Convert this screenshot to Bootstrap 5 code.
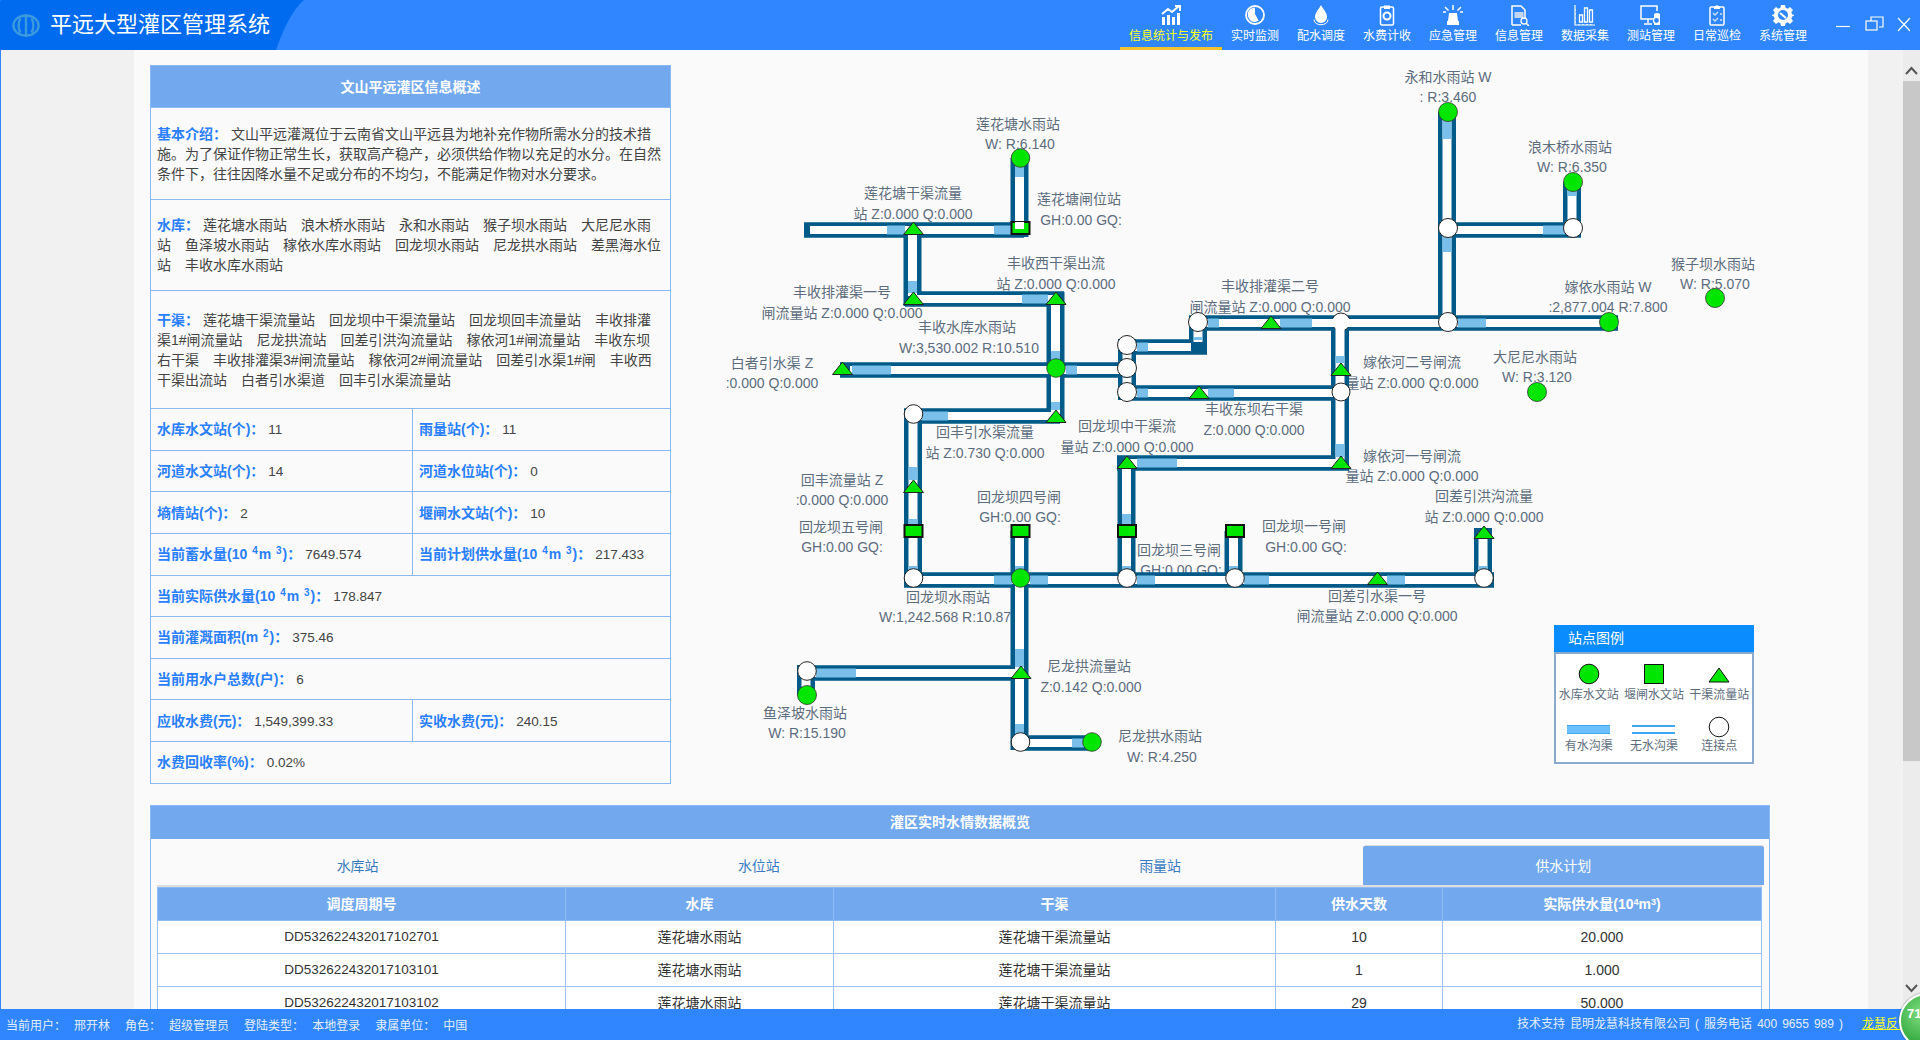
<!doctype html>
<html lang="zh-CN">
<head>
<meta charset="utf-8">
<title>平远大型灌区管理系统</title>
<link href="https://cdn.jsdelivr.net/npm/bootstrap@5.3.0/dist/css/bootstrap.min.css" rel="stylesheet">
<style>
html,body{height:100%;overflow:hidden}
body{font-family:"Liberation Sans","Noto Sans CJK SC",sans-serif;font-size:14px;line-height:20px;color:#444;background:#f1f1f1}
.app{height:1040px;position:relative;overflow:hidden}
.topbar{height:50px;background:#2f86ff;flex:none}
.brand{width:304px;height:50px;background:#006bee;clip-path:path('M0 2Q0 0 2 0H304C292 10 283 30 276 50H0Z');color:#fff;font-size:22px;padding-left:12px;gap:10px}
.navi{width:66px;height:50px;color:#fff;font-size:12px;line-height:16px;padding-top:4px;text-align:center;flex:none}
.navi svg{display:block;margin:0 auto 2px;width:22px;height:22px}
.navi.on{width:102px;color:#ffff22;border-bottom:3px solid #f2c230}
.wbtn{width:104px;height:50px;flex:none}
.mainw{flex:1;min-height:0;border-left:1px solid #2f86ff}
.leftg{width:133px;flex:none;background:#f1f1f1}
.content{width:1734px;flex:none;background:#fafafa;padding:15px 16px 0;overflow:hidden}
.rightg{width:35px;flex:none;background:#f1f1f1}
.sbar{width:17px;flex:none;background:#ececec;padding-top:16px}
.thumb{height:680px;background:#c8c8c8;margin-top:5px}
.toprow{height:720px;margin-bottom:20px}
.infop{width:520px;flex:none}
.infot{table-layout:fixed;width:520px;border-collapse:collapse;margin:0;--bs-table-bg:transparent;background:#fafafa}
.infot th,.infot td{border:1px solid #8ab8f0;padding:0 6px;vertical-align:middle;color:#444}
.infot .hd{background:#72a9ee;color:#fff;font-weight:700;text-align:center;height:42px}
.r92{height:91.6px}.r118{height:118px}.r42{height:41.6px}
.k{color:#2a7fff;font-weight:700}
.v{font-size:13.5px;margin-left:4px}
.k sup{font-size:10px;margin:0 1px}
.cl{font-family:"Noto Sans CJK TC",sans-serif;font-style:normal}
.canvas{width:1100px;height:720px;position:relative}
.canvas svg.flow{display:block}
.lb{font-size:14px;fill:#5d6d7d;text-anchor:middle;dominant-baseline:central}
.po{stroke:#015a87;fill:none}
.ph{stroke-width:15.500}.pv{stroke-width:18}
.pi{stroke:#fff;stroke-width:9;fill:none}
.ih{stroke-width:8}
.pw{stroke:#79bfea;stroke-width:9;fill:none}
.mw{fill:#fff;stroke:#222;stroke-width:1}
.mg{fill:#00e600;stroke:#333;stroke-width:.8}
.ms{fill:#00e600;stroke:#111;stroke-width:2}
.mt{fill:#00e600;stroke:#222;stroke-width:1}
.legend{position:absolute;left:884px;top:560px;width:200px;height:140px;background:#fff;font-size:12px;line-height:16px;color:#5d6d7d}
.leghd{height:27px;background:#0a8cff;color:#fff;font-size:14px;line-height:26px;padding-left:14px}
.legbd{height:112px;border:2px solid #8aa9cc;display:grid;grid-template-columns:1fr 1fr 1fr;grid-template-rows:53px 1fr;text-align:center;padding:9px 0 0}
.legbd svg{display:block;margin:0 auto 2px}
.legbd div:nth-child(n+4) svg{margin-bottom:0}
.botp{width:1620px;border:1px solid #8ab8f0;background:#fafafa;padding:0 7px 0 6px}
.both{height:33px;margin:0 -7px 0 -6px;background:#72a9ee;color:#fff;font-weight:700;text-align:center;line-height:33px}
.tabsx{margin-top:6px;--bs-nav-tabs-border-width:0;border-bottom:2px solid #ddd;flex-wrap:nowrap}
.tabsx .nav-link{height:40px;line-height:21px;color:#3a7bbf;font-size:14px;padding:11px 0 8px;border:0;border-radius:0}
.tabsx .nav-link.active{background:#72a9ee;color:#fff;border-top:1px solid #ddd;border-radius:3px 3px 0 0;margin-left:2px;padding-top:10px}
.dt{table-layout:fixed;margin:0;--bs-table-bg:#fff;text-align:center}
.dt th,.dt td{height:33px;padding:0;vertical-align:middle;border:1px solid #9fc3f0;color:#333}
.dt th{background:#72a9ee;color:#fff;font-weight:700;border-color:#8fbcf2}
.dt sup{font-size:9px}
.foot{height:31px;background:#2f86ff;color:#e3efff;font-size:12px;line-height:31px;padding:0 10px 0 6px;flex:none}
.foot a{color:#ffff22;margin:0 0 0 19px;white-space:nowrap}
.fk{margin-left:15px}.fv{margin-left:8px}
.fr{word-spacing:1.700px}
.ball{position:absolute;left:1899px;top:993px;width:56px;height:56px;border-radius:50%;border:2px solid #fff;background:radial-gradient(circle at 40% 35%,#7fdc7f,#2fa83c 70%);color:#fff;font-weight:700;font-size:13px;line-height:38px;padding-left:6px;box-shadow:0 0 2px #555}
</style>
</head>
<body>
<div class="app d-flex flex-column">
  <header class="topbar d-flex">
    <div class="brand d-flex align-items-center">
      <svg width="28" height="23" viewBox="0 0 28 23"><g fill="none" stroke="#3b9ade" stroke-width="2.4"><ellipse cx="14" cy="11.5" rx="12.6" ry="10"/><path d="M14 0V23"/><path d="M8.5 4.5C6 8 6 15 8.5 18.500M19.500 4.500C22 8 22 15 19.500 18.500"/></g></svg>
      <span>平远大型灌区管理系统</span>
    </div>
    <nav class="d-flex ms-auto">
      <div class="navi on"><svg viewBox="0 0 22 22"><path fill="#fff" d="M2 21V13h3v8zM7 21V11h3v10zM12 21V13h3v8zM17 21V9h3v12z"/><path d="M2 10L8 5l4 3 7-6M15 2h5v5" stroke="#fff" stroke-width="2" fill="none"/></svg>信息统计与发布</div>
      <div class="navi"><svg viewBox="0 0 22 22"><circle cx="11" cy="11" r="9" fill="none" stroke="#fff" stroke-width="1.800"/><path fill="#fff" d="M6.500 4.800L11 3.500V10l3.500 6.500-3 1.500A7.500 7.500 0 0 1 6.500 4.800z"/></svg>实时监测</div>
      <div class="navi"><svg viewBox="0 0 22 22"><path fill="#fff" d="M11 1c2 4 6 7.500 6 12a6 6 0 0 1-12 0C5 8.500 9 5 11 1z"/><path d="M4 15.500c0 7 14 7 14 0" fill="none" stroke="#fff"/></svg>配水调度</div>
      <div class="navi"><svg viewBox="0 0 22 22"><rect x="4.500" y="3" width="13" height="18" rx="1.500" fill="none" stroke="#fff" stroke-width="1.500"/><path fill="#fff" d="M8 1.500h6V5H8z"/><circle cx="11" cy="12" r="3.500" fill="none" stroke="#fff" stroke-width="2"/></svg>水费计收</div>
      <div class="navi"><svg viewBox="0 0 22 22"><path fill="#fff" d="M7 9h8l1 8H6zM5 17h12v4H5z"/><path d="M11 1v5M3 3l3.500 3.500M19 3l-3.500 3.500M1 8h3M18 8h3" stroke="#fff" stroke-width="1.500"/></svg>应急管理</div>
      <div class="navi"><svg viewBox="0 0 22 22"><path d="M4 21V2h9l4 4v9M4 21h9" fill="none" stroke="#fff" stroke-width="1.500"/><path fill="#c4d6f2" d="M6.500 8h9v6h-9z"/><circle cx="16" cy="17" r="3" fill="none" stroke="#fff" stroke-width="1.300"/><path d="M18 19l3 3" stroke="#fff" stroke-width="1.500"/></svg>信息管理</div>
      <div class="navi"><svg viewBox="0 0 22 22"><path d="M1 1v20h20M1 18h1M1 14h1M1 10h1M1 6h1M5 20v1M9 20v1M13 20v1M17 20v1" fill="none" stroke="#fff" stroke-width="1.200"/><path d="M5.500 11h3v7h-3zM10.500 4h3v14h-3zM15.500 6h3v12h-3z" fill="none" stroke="#fff" stroke-width="1.300"/></svg>数据采集</div>
      <div class="navi"><svg viewBox="0 0 22 22"><path d="M15 15H1V2h16v5M8 15v4M4 20h8" fill="none" stroke="#fff" stroke-width="1.500"/><path d="M14 10q3-2 6 0v11h-6z" fill="#fff"/><circle cx="16.500" cy="16.500" r="3" fill="#2f86ff" stroke="#fff" stroke-width="1.200"/></svg>测站管理</div>
      <div class="navi"><svg viewBox="0 0 22 22"><rect x="4" y="3" width="14" height="18" rx="1" fill="none" stroke="#fff" stroke-width="1.500"/><path fill="#fff" d="M8 3l3-2 3 2v2H8z"/><path d="M7 9l2 2 3-3M7 15l2 2 3-3M14 10h2M14 16h2" fill="none" stroke="#cfe0fa" stroke-width="1.300"/></svg>日常巡检</div>
      <div class="navi"><svg viewBox="0 0 22 22"><path fill="#fff" fill-rule="evenodd" d="M9 1h4l.6 2.800 2 .9L18 3l3 3-1.700 2.400.9 2L23 11v0l-2.800 1.600-.9 2L21 17l-3 3-2.400-1.700-2 .9L13 22H9l-.6-2.800-2-.9L4 20l-3-3 1.700-2.400-.9-2L-1 11l2.800-.6.9-2L1 6l3-3 2.400 1.700 2-.9zM11 6a5 5 0 1 0 0 10 5 5 0 0 0 0-10z"/><path d="M8 9l6 5" stroke="#fff" stroke-width="2"/></svg>系统管理</div>
    </nav>
    <svg class="wbtn" viewBox="1816 0 104 50"><g fill="none" stroke="#fff" stroke-width="1.200"><path d="M1836 26.500h14"/><path d="M1871 21v-4h12v10h-4"/><rect x="1866" y="21" width="11" height="9"/><path d="M1898 18l12 13M1910 18l-12 13"/></g></svg>
  </header>

  <div class="mainw d-flex">
    <div class="leftg"></div>
    <main class="content">
      <div class="toprow d-flex">
        <section class="infop">
          <table class="table infot">
            <colgroup><col style="width:262px"><col style="width:258px"></colgroup>
            <tr><th colspan="2" class="hd">文山平远灌区信息概述</th></tr>
            <tr class="r92"><td colspan="2"><span class="k">基本介绍<i class="cl">：</i></span> 文山平远灌溉位于云南省文山平远县为地补充作物所需水分的技术措施。为了保证作物正常生长，获取高产稳产，必须供给作物以充足的水分。在自然条件下，往往因降水量不足或分布的不均匀，不能满足作物对水分要求。</td></tr>
            <tr class="r92"><td colspan="2"><span class="k">水库<i class="cl">：</i></span> 莲花塘水雨站&emsp;浪木桥水雨站&emsp;永和水雨站&emsp;猴子坝水雨站&emsp;大尼尼水雨站&emsp;鱼泽坡水雨站&emsp;稼依水库水雨站&emsp;回龙坝水雨站&emsp;尼龙拱水雨站&emsp;差黑海水位站&emsp;丰收水库水雨站</td></tr>
            <tr class="r118"><td colspan="2"><span class="k">干渠<i class="cl">：</i></span> 莲花塘干渠流量站&emsp;回龙坝中干渠流量站&emsp;回龙坝回丰流量站&emsp;丰收排灌渠1#闸流量站&emsp;尼龙拱流站&emsp;回差引洪沟流量站&emsp;稼依河1#闸流量站&emsp;丰收东坝右干渠&emsp;丰收排灌渠3#闸流量站&emsp;稼依河2#闸流量站&emsp;回差引水渠1#闸&emsp;丰收西干渠出流站&emsp;白者引水渠道&emsp;回丰引水渠流量站</td></tr>
            <tr class="r42"><td><span class="k">水库水文站(个)<i class="cl">：</i></span><span class="v">11</span></td><td><span class="k">雨量站(个)<i class="cl">：</i></span><span class="v">11</span></td></tr>
            <tr class="r42"><td><span class="k">河道水文站(个)<i class="cl">：</i></span><span class="v">14</span></td><td><span class="k">河道水位站(个)<i class="cl">：</i></span><span class="v">0</span></td></tr>
            <tr class="r42"><td><span class="k">墒情站(个)<i class="cl">：</i></span><span class="v">2</span></td><td><span class="k">堰闸水文站(个)<i class="cl">：</i></span><span class="v">10</span></td></tr>
            <tr class="r42"><td><span class="k">当前蓄水量(10 <sup>4</sup>m <sup>3</sup>)<i class="cl">：</i></span><span class="v">7649.574</span></td><td><span class="k">当前计划供水量(10 <sup>4</sup>m <sup>3</sup>)<i class="cl">：</i></span><span class="v">217.433</span></td></tr>
            <tr class="r42"><td colspan="2"><span class="k">当前实际供水量(10 <sup>4</sup>m <sup>3</sup>)<i class="cl">：</i></span><span class="v">178.847</span></td></tr>
            <tr class="r42"><td colspan="2"><span class="k">当前灌溉面积(m <sup>2</sup>)<i class="cl">：</i></span><span class="v">375.46</span></td></tr>
            <tr class="r42"><td colspan="2"><span class="k">当前用水户总数(户)<i class="cl">：</i></span><span class="v">6</span></td></tr>
            <tr class="r42"><td><span class="k">应收水费(元)<i class="cl">：</i></span><span class="v">1,549,399.33</span></td><td><span class="k">实收水费(元)<i class="cl">：</i></span><span class="v">240.15</span></td></tr>
            <tr class="r42"><td colspan="2"><span class="k">水费回收率(%)<i class="cl">：</i></span><span class="v">0.02%</span></td></tr>
          </table>
        </section>

        <section class="canvas">
          <svg class="flow" width="1100" height="720" viewBox="670 65 1100 720">
            <defs><polygon id="tri" class="mt" points="0,0 -10,12.500 10,12.500"/></defs>
            <g class="labels">
              <text class="lb" x="1018" y="124">莲花塘水雨站</text><text class="lb" x="1020" y="144">W: R:6.140</text>
              <text class="lb" x="913" y="193">莲花塘干渠流量</text><text class="lb" x="913" y="214">站 Z:0.000 Q:0.000</text>
              <text class="lb" x="1079" y="199">莲花塘闸位站</text><text class="lb" x="1081" y="220">GH:0.00 GQ:</text>
              <text class="lb" x="1056" y="263">丰收西干渠出流</text><text class="lb" x="1056" y="284">站 Z:0.000 Q:0.000</text>
              <text class="lb" x="842" y="292">丰收排灌渠一号</text><text class="lb" x="842" y="313">闸流量站 Z:0.000 Q:0.000</text>
              <text class="lb" x="967" y="327">丰收水库水雨站</text><text class="lb" x="969" y="348">W:3,530.002 R:10.510</text>
              <text class="lb" x="772" y="363">白者引水渠 Z</text><text class="lb" x="772" y="383">:0.000 Q:0.000</text>
              <text class="lb" x="985" y="432">回丰引水渠流量</text><text class="lb" x="985" y="453">站 Z:0.730 Q:0.000</text>
              <text class="lb" x="1127" y="426">回龙坝中干渠流</text><text class="lb" x="1127" y="447">量站 Z:0.000 Q:0.000</text>
              <text class="lb" x="1254" y="409">丰收东坝右干渠</text><text class="lb" x="1254" y="430">Z:0.000 Q:0.000</text>
              <text class="lb" x="842" y="480">回丰流量站 Z</text><text class="lb" x="842" y="500">:0.000 Q:0.000</text>
              <text class="lb" x="1019" y="497">回龙坝四号闸</text><text class="lb" x="1020" y="517">GH:0.00 GQ:</text>
              <text class="lb" x="841" y="527">回龙坝五号闸</text><text class="lb" x="842" y="547">GH:0.00 GQ:</text>
              <text class="lb" x="1179" y="550">回龙坝三号闸</text><text class="lb" x="1181" y="570">GH:0.00 GQ:</text>
              <text class="lb" x="1304" y="526">回龙坝一号闸</text><text class="lb" x="1306" y="547">GH:0.00 GQ:</text>
              <text class="lb" x="1484" y="496">回差引洪沟流量</text><text class="lb" x="1484" y="517">站 Z:0.000 Q:0.000</text>
              <text class="lb" x="1377" y="596">回差引水渠一号</text><text class="lb" x="1377" y="616">闸流量站 Z:0.000 Q:0.000</text>
              <text class="lb" x="948" y="597">回龙坝水雨站</text><text class="lb" x="949" y="617">W:1,242.568 R:10.870</text>
              <text class="lb" x="1089" y="666">尼龙拱流量站</text><text class="lb" x="1091" y="687">Z:0.142 Q:0.000</text>
              <text class="lb" x="805" y="713">鱼泽坡水雨站</text><text class="lb" x="807" y="733">W: R:15.190</text>
              <text class="lb" x="1160" y="736">尼龙拱水雨站</text><text class="lb" x="1162" y="757">W: R:4.250</text>
              <text class="lb" x="1448" y="77">永和水雨站 W</text><text class="lb" x="1448" y="97">: R:3.460</text>
              <text class="lb" x="1570" y="147">浪木桥水雨站</text><text class="lb" x="1572" y="167">W: R:6.350</text>
              <text class="lb" x="1713" y="264">猴子坝水雨站</text><text class="lb" x="1715" y="284">W: R:5.070</text>
              <text class="lb" x="1608" y="287">嫁依水雨站 W</text><text class="lb" x="1608" y="307">:2,877.004 R:7.800</text>
              <text class="lb" x="1270" y="286">丰收排灌渠二号</text><text class="lb" x="1270" y="307">闸流量站 Z:0.000 Q:0.000</text>
              <text class="lb" x="1412" y="362">嫁依河二号闸流</text><text class="lb" x="1412" y="383">量站 Z:0.000 Q:0.000</text>
              <text class="lb" x="1412" y="456">嫁依河一号闸流</text><text class="lb" x="1412" y="476">量站 Z:0.000 Q:0.000</text>
              <text class="lb" x="1535" y="357">大尼尼水雨站</text><text class="lb" x="1537" y="377">W: R:3.120</text>
            </g>
            <path class="po ph" d="M804 230H1024M905 299H1064M840 370H1120M904 416H1060M904 580H1494M797 673H1021M1020 743H1092M1117 463H1349M1127 393H1341M1127 347H1207M1189 323H1618M1447 230H1581"/>
            <path class="po pv" d="M1019.500 158V237M912.500 230V306M1055.500 292V423M913 409V587M1019.500 531V750M806 665V695M1126.500 463V587M1233.500 531V587M1483 528V587M1127 339V400M1198 316V354M1340 316V470M1447 112V330M1572 182V237"/>
            <circle class="mw" cx="1341" cy="322" r="9"/>
            <path class="pi ih" d="M810 230H1019M912 299H1055M850 370H1127M913 416H1055M913 580H1484M807 673H1020M1020 743H1092M1127 463H1340M1127 393H1340M1127 347H1191M1198 323H1609M1447 230H1572"/>
            <path class="pi" d="M1019.500 164V228M912.500 230V296M1055.500 299V416M913 414V578M1019.500 531V742M806 671V690M1126.500 463V578M1233.500 531V578M1483 532V578M1127 345V391M1198 322V342M1340 323V463M1447 112V322M1572 182V228"/>
            <path class="pw ih" d="M887 230H905M994 230H1012M1022 299H1048M852 370H891M1066 370H1077M922 416H948M994 580H1012M1030 580H1048M1137 580H1155M1244 580H1269M1387 580H1405M816 673H856M1072 743H1084M1137 463H1177M1137 393H1148M1208 393H1234M1137 347H1148M1208 323H1219M1280 323H1312M1458 323H1486M1543 230H1565"/>
            <path class="pw" d="M1019.500 164V177M912.500 281V293M1055.500 351V363M1055.500 402V410M913 467V480M913 519V526M913 566V573M1019.500 566V573M1019.500 649V667M1019.500 724V736M806 687V690M1126.500 514V526M1126.500 566V573M1233.500 566V573M1483 566V573M1127 359V362M1127 374V378M1198 337V340M1340 356V363M1340 444V457M1447 117V139M1447 234V252M1572 187V196"/>
            <circle class="mg" cx="1020.500" cy="158" r="9.300"/>
            <circle class="mg" cx="1056" cy="368" r="9.300"/>
            <circle class="mg" cx="1020.500" cy="578" r="9.300"/>
            <circle class="mg" cx="807" cy="695" r="9.500"/>
            <circle class="mg" cx="1092" cy="742" r="9.300"/>
            <circle class="mg" cx="1448" cy="112" r="9.500"/>
            <circle class="mg" cx="1573" cy="182" r="9.500"/>
            <circle class="mg" cx="1715" cy="298" r="9.500"/>
            <circle class="mg" cx="1537" cy="392" r="9.500"/>
            <circle class="mg" cx="1609" cy="322" r="9.500"/>
            <circle class="mw" cx="913.500" cy="414" r="9.300"/>
            <circle class="mw" cx="913.500" cy="578" r="9.300"/>
            <circle class="mw" cx="1127" cy="578" r="9.300"/>
            <circle class="mw" cx="1235" cy="578" r="9.300"/>
            <circle class="mw" cx="1484" cy="578" r="9.300"/>
            <circle class="mw" cx="807" cy="671" r="9.300"/>
            <circle class="mw" cx="1020.500" cy="742" r="9.300"/>
            <circle class="mw" cx="1127" cy="345" r="9.500"/>
            <circle class="mw" cx="1127" cy="368" r="9.500"/>
            <circle class="mw" cx="1127" cy="392" r="9.500"/>
            <circle class="mw" cx="1198" cy="322" r="9.500"/>
            <circle class="mw" cx="1341" cy="392" r="9"/>
            <circle class="mw" cx="1448" cy="322" r="9.500"/>
            <circle class="mw" cx="1448" cy="228" r="9.500"/>
            <circle class="mw" cx="1573" cy="228" r="9.500"/>
            <rect class="ms" x="1011.500" y="222" width="18" height="12"/>
            <path class="pi" d="M1019.500 222V229"/>
            <rect class="ms" x="904.500" y="525" width="18" height="12"/>
            <rect class="ms" x="1011.500" y="525" width="18" height="12"/>
            <rect class="ms" x="1118" y="525" width="18" height="12"/>
            <rect class="ms" x="1226" y="525" width="18" height="12"/>
            <use href="#tri" x="913.500" y="222"/>
            <use href="#tri" x="913.500" y="292"/>
            <use href="#tri" x="1056" y="292"/>
            <use href="#tri" x="842.500" y="362"/>
            <use href="#tri" x="1056" y="410"/>
            <use href="#tri" x="913.500" y="480"/>
            <use href="#tri" x="1127" y="456"/>
            <use href="#tri" x="1021" y="666"/>
            <use href="#tri" x="1484" y="526"/>
            <use href="#tri" x="1377.500" y="572"/>
            <use href="#tri" x="1271" y="316"/>
            <use href="#tri" x="1341" y="363"/>
            <use href="#tri" x="1341" y="456"/>
            <use href="#tri" x="1199" y="386"/>
          </svg>
          <aside class="legend">
            <div class="leghd">站点图例</div>
            <div class="legbd">
              <div><svg width="22" height="22"><circle cx="11" cy="11" r="9.800" fill="#00e600" stroke="#111"/></svg>水库水文站</div>
              <div><svg width="22" height="22"><rect x="1.500" y="1.500" width="19" height="19" fill="#00e600" stroke="#111"/></svg>堰闸水文站</div>
              <div><svg width="22" height="22"><polygon points="11,5 21,19 1,19" fill="#00e600" stroke="#111"/></svg>干渠流量站</div>
              <div><svg width="44" height="22"><path d="M0 9h43v9H0z" fill="#6cc0ff"/><path d="M0 9.500h43M0 17.500h43" stroke="#3fa7f2"/></svg>有水沟渠</div>
              <div><svg width="44" height="22"><path d="M0 10h43M0 17h43" stroke="#3fa7f2" stroke-width="2"/></svg>无水沟渠</div>
              <div><svg width="22" height="22"><circle cx="11" cy="11" r="9.800" fill="#fff" stroke="#111"/></svg>连接点</div>
            </div>
          </aside>
        </section>
      </div>

      <section class="botp">
        <div class="both">灌区实时水情数据概览</div>
        <ul class="nav nav-tabs nav-justified tabsx">
          <li class="nav-item"><a class="nav-link" href="#">水库站</a></li>
          <li class="nav-item"><a class="nav-link" href="#">水位站</a></li>
          <li class="nav-item"><a class="nav-link" href="#">雨量站</a></li>
          <li class="nav-item"><a class="nav-link active" href="#">供水计划</a></li>
        </ul>
        <table class="table dt">
          <colgroup><col style="width:408px"><col style="width:268px"><col style="width:442px"><col style="width:167px"><col></colgroup>
          <thead><tr><th>调度周期号</th><th>水库</th><th>干渠</th><th>供水天数</th><th>实际供水量(10<sup>4</sup>m<sup>3</sup>)</th></tr></thead>
          <tbody>
            <tr><td class="v">DD532622432017102701</td><td>莲花塘水雨站</td><td>莲花塘干渠流量站</td><td>10</td><td>20.000</td></tr>
            <tr><td class="v">DD532622432017103101</td><td>莲花塘水雨站</td><td>莲花塘干渠流量站</td><td>1</td><td>1.000</td></tr>
            <tr><td class="v">DD532622432017103102</td><td>莲花塘水雨站</td><td>莲花塘干渠流量站</td><td>29</td><td>50.000</td></tr>
          </tbody>
        </table>
      </section>
    </main>
    <div class="rightg"></div>
    <div class="sbar d-flex flex-column">
      <svg width="17" height="10" viewBox="0 0 17 10"><path d="M3 8l5.500-6 5.500 6" fill="none" stroke="#555" stroke-width="2"/></svg>
      <div class="thumb"></div>
      <svg class="mt-auto mb-3" width="17" height="10" viewBox="0 0 17 10"><path d="M3 2l5.500 6 5.500-6" fill="none" stroke="#555" stroke-width="2"/></svg>
    </div>
  </div>

  <footer class="foot d-flex">
    <span class="flex-grow-1">当前用户<i class="cl">：</i><span class="fv">邢开林</span><span class="fk">角色<i class="cl">：</i></span><span class="fv">超级管理员</span><span class="fk">登陆类型<i class="cl">：</i></span><span class="fv">本地登录</span><span class="fk">隶属单位<i class="cl">：</i></span><span class="fv">中国</span></span>
    <span class="fr">技术支持 昆明龙慧科技有限公司 ( 服务电话 400 9655 989 )</span>
    <a href="#">龙慧反馈</a>
  </footer>
  <div class="ball">71</div>
</div>
<script src="https://cdn.jsdelivr.net/npm/bootstrap@5.3.0/dist/js/bootstrap.bundle.min.js"></script>
</body>
</html>
